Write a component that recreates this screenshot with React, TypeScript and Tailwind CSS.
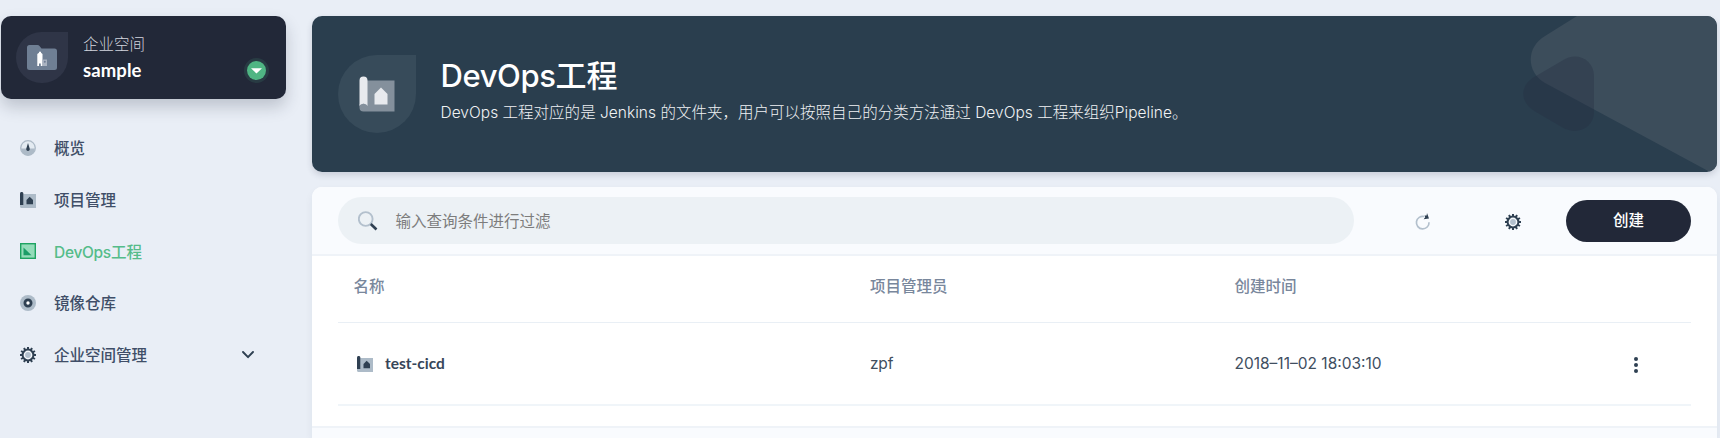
import React from "react";

const gearTeeth = Array.from({ length: 12 }, (_, i) => i * 30);

function Gear({ className = "" }: { className?: string }) {
  return (
    <svg viewBox="0 0 16 16" className={`block h-4 w-4 shrink-0 ${className}`}>
      {gearTeeth.map((a) => (
        <rect key={a} x="7" y="0" width="2" height="3" fill="#2f4052" transform={`rotate(${a} 8 8)`} />
      ))}
      <circle cx="8" cy="8" r="5.400" fill="#f4f7fb" stroke="#2f4052" strokeWidth="2" />
      <circle cx="8" cy="8" r="2.900" fill="#b3c0cd" />
    </svg>
  );
}

function Gauge() {
  return (
    <svg viewBox="0 0 16 16" className="block h-4 w-4 shrink-0">
      <circle cx="8" cy="8" r="7.300" fill="#e4ebf2" stroke="#adbac7" strokeWidth="1.300" />
      <path d="M1 8.600a7 7 0 0 0 14 0z" fill="#adbac7" />
      <path d="M8 3l1.700 5.600a1.800 1.800 0 1 1-3.400 0z" fill="#2f4052" />
    </svg>
  );
}

function Blueprint() {
  return (
    <svg viewBox="0 0 16 16" className="block h-4 w-4 shrink-0">
      <path d="M3 2h13v14H1.600A1.600 1.600 0 0 1 0 14.400V13h3z" fill="#adbbc8" />
      <path d="M0 1.600a1.600 1.600 0 0 1 3.300 0V13H0z" fill="#2f4052" />
      <path d="M9.700 4.800L13 8v4.200H6.500V8z" fill="#2f4052" />
    </svg>
  );
}

function DevopsIcon() {
  return (
    <svg viewBox="0 0 16 16" className="block h-4 w-4 shrink-0">
      <rect x="0.700" y="0.700" width="14.600" height="14.600" fill="#94dcba" stroke="#1ea362" strokeWidth="1.400" />
      <path d="M3.500 4.500L11.500 12.300H3.500z" fill="#1c9d68" />
    </svg>
  );
}

function Disc() {
  return (
    <svg viewBox="0 0 16 16" className="block h-4 w-4 shrink-0">
      <circle cx="8" cy="8" r="8" fill="#adbbc8" />
      <circle cx="8" cy="8" r="3.100" fill="#fff" stroke="#2f4052" strokeWidth="2.800" />
    </svg>
  );
}

const menu = [
  { label: "概览", icon: <Gauge /> },
  { label: "项目管理", icon: <Blueprint /> },
  { label: "DevOps工程", icon: <DevopsIcon />, active: true },
  { label: "镜像仓库", icon: <Disc /> },
  { label: "企业空间管理", icon: <Gear />, expandable: true },
];

function Sidebar() {
  return (
    <aside className="w-[311.500px] shrink-0 pt-4 pl-px">
      <div className="flex h-[83px] w-[285px] rounded-[10px] bg-[#222838] pt-4 pl-[15px] shadow-[0_8px_16px_rgba(36,46,66,0.22)]">
        <div className="flex h-[51px] w-[52px] items-center justify-center rounded-[26px] rounded-tr-none bg-[#2f3547]">
          <svg viewBox="0 0 30 26" className="block h-[26px] w-[30px]">
            <path d="M0 2.500A2.500 2.500 0 0 1 2.500 0H10.500a2.500 2.500 0 0 1 2 1L14.500 3.500H27.500A2.500 2.500 0 0 1 30 6V22.500a2.500 2.500 0 0 1-2.500 2.500H2.500A2.500 2.500 0 0 1 0 22.500z" fill="#6f7f94" />
            <path d="M10.300 9L12 7.800V6.800h2v1L15.500 9V21H13.800V18.500H12V21h-1.700z" fill="#fff" />
            <path d="M15.500 14.500h4.500V21h-4.500z" fill="#aab3c1" />
            <circle cx="17.800" cy="16.800" r="1" fill="#717f96" />
          </svg>
        </div>
        <div className="ml-[15px] w-[151px] pt-[2px]">
          <div className="text-[15.5px] leading-[22px] font-light text-[#d3d6df]">企业空间</div>
          <div className="mt-[2px] font-['Lato'] text-[18.5px] leading-[24px] font-bold tracking-[0.1px] text-white">sample</div>
        </div>
        <div className="mt-[26px] ml-[10px] flex h-[25px] w-[25px] items-center justify-center rounded-full bg-[#283b43]">
          <div className="flex h-[19px] w-[19px] items-center justify-center rounded-full bg-[#4fb583]">
            <svg viewBox="0 0 11 6" className="block h-[6px] w-[11px]">
              <path d="M0 0.300H11L5.500 5.500z" fill="#fff" />
            </svg>
          </div>
        </div>
      </div>
      <nav className="pt-[23px]">
        {menu.map((m) => (
          <div key={m.label} className="flex h-[51.800px] items-center pl-[19px]">
            {m.icon}
            <span
              className={
                m.active
                  ? "ml-[18px] flex-1 pt-[1.500px] text-[15.500px] font-medium text-[#55bc8a]"
                  : "ml-[18px] flex-1 pt-[1.500px] text-[15.500px] font-medium text-[#404e68]"
              }
            >
              {m.active ? (
                <>
                  <span className="tracking-[-0.300px]">DevOps</span>工程
                </>
              ) : (
                m.label
              )}
            </span>
            {m.expandable && (
              <svg viewBox="0 0 12 8" className="mr-[57.500px] block h-2 w-3" fill="none">
                <path d="M1 1L6 6.200L11 1" stroke="#2f4052" strokeWidth="1.900" strokeLinecap="round" strokeLinejoin="round" />
              </svg>
            )}
          </div>
        ))}
      </nav>
    </aside>
  );
}

function Banner() {
  return (
    <header className="relative h-[155.500px] overflow-hidden rounded-[10px] bg-[#2a3e4e]">
      <svg viewBox="0 0 200 156" className="absolute top-0 right-0 h-[156px] w-[200px]">
        <path d="M60 0L28 20C9 31 9 56 28 67L193 156H200V0z" fill="#3c4d5b" />
        <path d="M45.500 44.500C60 35 77 44 77 60V96C77 112 60 120 45.500 111.500L19 96C2 86 2 69 19 60z" fill="#242e42" fillOpacity="0.350" />
      </svg>
      <div className="flex pt-[39px] pl-[26px]">
        <div className="flex h-[78px] w-[78px] items-center justify-center rounded-[39px] rounded-tr-none bg-[#374b5a]">
          <svg viewBox="0 0 36 36" className="block h-9 w-9">
            <path d="M8 4.500H35.500V35.500H4.500A4 4 0 0 1 .5 31.500V28H8z" fill="#84909c" />
            <path d="M.5 4.500a4 4 0 0 1 8 0V30C7 27 2 27 .5 30z" fill="#e8eaee" />
            <path d="M22 11.500L28.500 18V28.500H15.500V18z" fill="#e8eaee" />
          </svg>
        </div>
        <div className="ml-[25px]">
          <h1 className="text-[31px] leading-[42px] font-medium whitespace-nowrap text-white">
            <span className="tracking-[-0.400px]">DevOps</span>工程
          </h1>
          <p className="mt-[4px] text-[15.500px] leading-[24px] font-light tracking-[0.020px] whitespace-nowrap text-[#f0f2f4]">
            DevOps 工程对应的是 Jenkins 的文件夹，用户可以按照自己的分类方法通过 DevOps 工程来组织Pipeline。
          </p>
        </div>
      </div>
    </header>
  );
}

function Toolbar() {
  return (
    <div className="flex h-[69px] border-b-2 border-[#eff3f8] bg-[#f9fbfe] pt-[10px] pl-[26px]">
      <div className="flex h-[47px] w-[1016px] items-center rounded-full bg-[#ecf1f5] pl-5">
        <svg viewBox="0 0 20 20" className="block h-5 w-5" fill="none">
          <circle cx="7.700" cy="8" r="6.900" stroke="#b3c0cd" strokeWidth="1.900" />
          <path d="M12.800 13L18.500 18.500" stroke="#2f4052" strokeWidth="2.600" />
        </svg>
        <span className="ml-[18px] pt-[1.500px] text-[15.500px] text-[#7d7d7d]">输入查询条件进行过滤</span>
      </div>
      <svg viewBox="0 0 16 17" className="mt-[16px] ml-[61px] block h-[17px] w-4" fill="none">
        <path d="M9.300 3.500A6.300 6.300 0 1 0 14 9.200" stroke="#b3c0cd" strokeWidth="1.700" />
        <path d="M12 0L14 5.600L8.600 6.300L10.200 4.200L9.600 2.400L11.600 2.600z" fill="#2f4052" />
      </svg>
      <Gear className="mt-[17px] ml-[74.500px]" />
      <button className="mt-[3px] ml-[45px] h-[42px] w-[125px] rounded-full bg-[#222838] text-[15.500px] font-medium text-white">创建</button>
    </div>
  );
}

function Table() {
  return (
    <section className="flex h-[251px] flex-col overflow-hidden rounded-t-[10px] bg-white">
      <Toolbar />
      <div className="px-[26px]">
        <div className="grid h-[67px] grid-cols-[516.500px_364.500px_1fr] items-center border-b border-[#e9eff5] pb-[5px] pl-4 text-[15.500px] font-medium text-[#79879c]">
          <span>名称</span>
          <span>项目管理员</span>
          <span>创建时间</span>
        </div>
        <div className="grid h-[83px] grid-cols-[516.500px_364.500px_1fr_56.500px] items-center border-b-2 border-[#f0f5f9] pl-4 text-[15.500px] text-[#404e5f]">
          <span className="flex items-center pl-[3px]">
            <Blueprint />
            <span className="ml-[12.500px] font-['Lato'] text-[15.500px] font-bold text-[#364559]">test-cicd</span>
          </span>
          <span className="pt-px tracking-[-0.200px]">zpf</span>
          <span className="pt-px">2018–11–02 18:03:10</span>
          <svg viewBox="0 0 4 16" className="mt-[3px] block h-4 w-1 overflow-visible" fill="#2f4052">
            <circle cx="2" cy="2" r="2" />
            <circle cx="2" cy="8" r="2" />
            <circle cx="2" cy="14" r="2" />
          </svg>
        </div>
      </div>
      <div className="mt-5 flex-1 border-t-2 border-[#eff3f8] bg-[#f9fbfe]" />
    </section>
  );
}

export default function App() {
  return (
    <div className="flex h-[438px] w-[1720px] overflow-hidden bg-[#e9eef6] font-['Inter','Noto_Sans_CJK_SC',sans-serif]">
      <Sidebar />
      <main className="w-[1405px] shrink-0 pt-4">
        <div className="rounded-[10px] shadow-[0_3px_6px_rgba(36,46,66,0.16)]">
          <Banner />
        </div>
        <div className="mt-[15.500px] rounded-t-[10px] shadow-[0_4px_8px_rgba(36,46,66,0.06)]">
          <Table />
        </div>
      </main>
    </div>
  );
}
